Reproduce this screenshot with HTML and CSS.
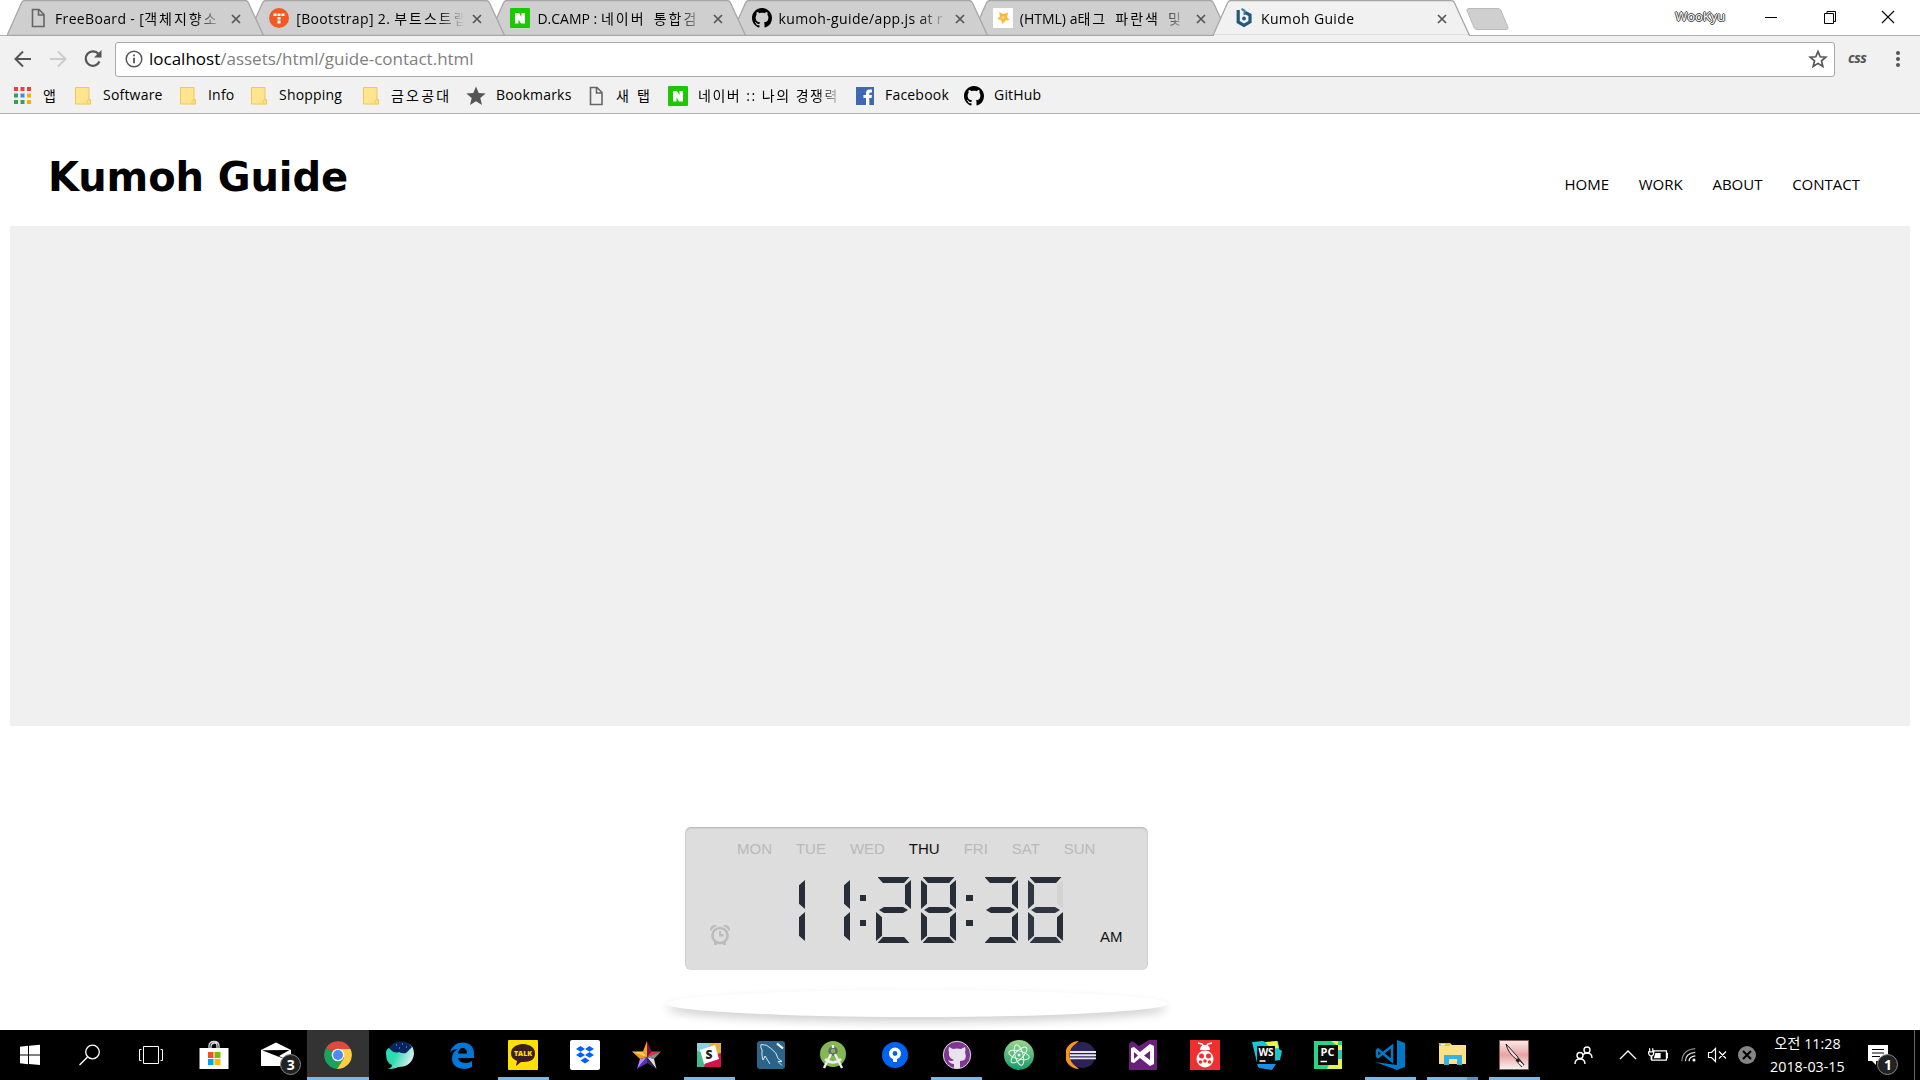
FILE: index.html
```html
<!DOCTYPE html>
<html lang="ko">
<head>
<meta charset="utf-8">
<title>Kumoh Guide</title>
<link rel="stylesheet" href="styles.css">
</head>
<body>
<svg class="defs" width="0" height="0" aria-hidden="true">
  <symbol id="doc" viewBox="0 0 20 20"><path d="M4.500 1.500h6.500l5 5V18.500H4.500zM10.500 1.500V7H16" fill="none" stroke="#666" stroke-width="1.600"/></symbol>
  <symbol id="naver" viewBox="0 0 20 20"><rect width="20" height="20" rx="1" fill="#1ec800"/><path d="M5 5h4l2.500 4V5H15v10.500h-4l-2.500-4v4H5z" fill="#fff"/></symbol>
  <symbol id="octo" viewBox="0 0 16 16"><path d="M8 0C3.580 0 0 3.580 0 8c0 3.540 2.290 6.530 5.470 7.590.4.070.550-.170.550-.380 0-.190-.010-.820-.010-1.490-2.010.370-2.530-.490-2.690-.940-.090-.230-.480-.940-.820-1.130-.280-.150-.680-.520-.010-.530.630-.010 1.080.580 1.230.820.720 1.210 1.870.870 2.330.660.070-.520.280-.870.510-1.070-1.780-.2-3.640-.890-3.640-3.950 0-.870.310-1.590.820-2.150-.080-.2-.360-1.020.080-2.120 0 0 .670-.210 2.200.820.640-.180 1.320-.270 2-.270s1.360.090 2 .270c1.530-1.040 2.200-.820 2.200-.820.440 1.100.160 1.920.080 2.120.510.560.820 1.270.820 2.150 0 3.070-1.870 3.750-3.650 3.950.290.250.540.730.540 1.480 0 1.070-.010 1.930-.010 2.200 0 .210.150.460.550.380A8.010 8.010 0 0 0 16 8c0-4.420-3.580-8-8-8z"/></symbol>
  <symbol id="folder" viewBox="0 0 20 20"><path d="M2.500 1.500h13.500v12h1.500v4.500h-15z" fill="#ffe58f" stroke="#ecc95a"/><path d="M14 18v-3.500q1.700-2 3.500 0V18z" fill="#fbdc78" stroke="#ecc95a" stroke-width=".7"/></symbol>
  <symbol id="close" viewBox="0 0 12 12"><path d="M2 2l8 8M10 2l-8 8" stroke="#555" stroke-width="1.700"/></symbol>
  <symbol id="tabshape" viewBox="0 0 258 36" preserveAspectRatio="none"><path d="M0 35.500L14.500 3Q15.500.5 18 .5H239Q241.500.5 242.500 3L257.500 35.500z" /></symbol>
</svg>

<header class="chrome">
  <div class="tabstrip">
    <div class="tab"><svg class="shape"><use href="#tabshape"/></svg><svg class="fav"><use href="#doc"/></svg><span class="title wide">FreeBoard - [<span class="ko">객체지향소</span></span><svg class="x"><use href="#close"/></svg></div>
    <div class="tab"><svg class="shape"><use href="#tabshape"/></svg><svg class="fav" viewBox="0 0 20 20"><circle cx="10" cy="10" r="10" fill="#f15a24"/><path d="M4.500 5.500h3v2.500h-3zM8.500 5.500h3v2.500h-3zM12.500 5.500h3v2.500h-3zM8.500 9h3v2.500h-3zM8.500 12.500h3v3h-3z" fill="#fff"/></svg><span class="title wide">[Bootstrap] 2. <span class="ko">부트스트랩</span></span><svg class="x"><use href="#close"/></svg></div>
    <div class="tab"><svg class="shape"><use href="#tabshape"/></svg><svg class="fav"><use href="#naver"/></svg><span class="title">D.CAMP : <span class="ko">네이버 통합검</span></span><svg class="x"><use href="#close"/></svg></div>
    <div class="tab"><svg class="shape"><use href="#tabshape"/></svg><svg class="fav"><use href="#octo"/></svg><span class="title wide">kumoh-guide/app.js at r</span><svg class="x"><use href="#close"/></svg></div>
    <div class="tab"><svg class="shape"><use href="#tabshape"/></svg><svg class="fav" viewBox="0 0 20 20"><path d="M0 0h20v20H0z" fill="#fff"/><path d="M6 4l4 2 5-1.500-1 4.500 2.500 3-4 .5L9.500 16 8 12l-4-1 3-2.500z" fill="#fdb933"/><circle cx="10" cy="9.500" r="1.500" fill="#ffe08a"/></svg><span class="title">(HTML) a<span class="ko">태그 파란색 및</span></span><svg class="x"><use href="#close"/></svg></div>
    <div class="tab active"><svg class="shape"><use href="#tabshape"/></svg><svg class="fav" viewBox="0 0 20 20"><path d="M4.200 2v12L10 17.300l6-3.400V7L11 4.300" fill="none" stroke="#24597f" stroke-width="3.200"/><path d="M7.500 1l3 1.500V7" fill="none" stroke="#3b7aa5" stroke-width="2"/><circle cx="10" cy="10.500" r="1.900" fill="#24597f"/></svg><span class="title wide">Kumoh Guide</span><svg class="x"><use href="#close"/></svg></div>
    <svg class="newtab" viewBox="0 0 44 22"><path d="M3 .5H32q2 0 3 2l7 17q.5 2-2 2H11q-2 0-3-2L1 2.500Q.5.5 3 .5z" fill="#cfcfcf" stroke="#bbb"/></svg>
    <span class="user">WooKyu</span>
    <div class="winbtns">
      <svg viewBox="0 0 14 14"><path d="M1 7.500h12" stroke="#000"/></svg>
      <svg viewBox="0 0 14 14"><path d="M1.500 3.500h9v10h-9zM4 3V1.500h8.500v10H11" fill="none" stroke="#000"/></svg>
      <svg viewBox="0 0 14 14"><path d="M1 1l12 12M13 1L1 13" stroke="#000" stroke-width="1.100"/></svg>
    </div>
  </div>

  <div class="toolbar">
    <svg class="nav" viewBox="0 0 20 20"><path d="M18 10H3M10 2.500L2.500 10l7.500 7.500" fill="none" stroke="#555" stroke-width="2"/></svg>
    <svg class="nav" viewBox="0 0 20 20"><path d="M2 10h15M10 2.500l7.500 7.500-7.500 7.500" fill="none" stroke="#ccc" stroke-width="2"/></svg>
    <svg class="nav" viewBox="0 0 20 20"><path d="M16.500 12.500A7.200 7.200 0 1 1 15.500 5" fill="none" stroke="#555" stroke-width="2.200"/><path d="M18.500 1v7.500H11z" fill="#555"/></svg>
    <div class="omnibox">
      <svg class="info" viewBox="0 0 18 18"><circle cx="9" cy="9" r="7.800" fill="none" stroke="#555" stroke-width="1.500"/><path d="M8.100 4.500h1.800v1.800H8.100zM8.100 7.700h1.800v5.600H8.100z" fill="#555"/></svg>
      <span class="url"><b>localhost</b>/assets/html/guide-contact.html</span>
      <svg class="star" viewBox="0 0 20 20"><path d="M10 2.500l2.200 5.300 5.600.4-4.300 3.700 1.300 5.500-4.800-3-4.800 3 1.300-5.500L2.200 8.200l5.600-.4z" fill="none" stroke="#555" stroke-width="1.700"/></svg>
    </div>
    <span class="css">css</span>
    <svg class="dots" viewBox="0 0 6 18"><circle cx="3" cy="3" r="2" fill="#555"/><circle cx="3" cy="9" r="2" fill="#555"/><circle cx="3" cy="15" r="2" fill="#555"/></svg>
  </div>

  <nav class="bookmarks">
    <div class="bm apps"><svg viewBox="0 0 17 17"><path d="M0 0h4v4H0zM6.500 0h4v4h-4zM13 0h4v4h-4z" fill="#ea4335"/><path d="M0 6.500h4v4H0zM0 13h4v4H0zM6.500 13h4v4h-4z" fill="#34a057"/><path d="M6.500 6.500h4v4h-4z" fill="#4285f4"/><path d="M13 6.500h4v4h-4zM13 13h4v4h-4z" fill="#fbab05"/></svg><span>앱</span></div>
    <div class="bm"><svg><use href="#folder"/></svg><span>Software</span></div>
    <div class="bm"><svg><use href="#folder"/></svg><span>Info</span></div>
    <div class="bm"><svg><use href="#folder"/></svg><span>Shopping</span></div>
    <div class="bm"><svg><use href="#folder"/></svg><span class="ko loose">금오공대</span></div>
    <div class="bm"><svg viewBox="0 0 20 20"><path d="M10 .5l2.700 6.500 7 .5-5.400 4.500 1.700 7L10 15.200 4 19l1.700-7L.3 7.500l7-.5z" fill="#555"/></svg><span>Bookmarks</span></div>
    <div class="bm"><svg><use href="#doc"/></svg><span class="ko loose">새 탭</span></div>
    <div class="bm"><svg><use href="#naver"/></svg><span class="ko fade">네이버 :: 나의 경쟁력</span></div>
    <div class="bm"><svg viewBox="0 0 20 20"><path d="M1 1h18v18H1z" fill="#4267b2"/><path d="M11 19v-7H8.500V9H11V7q0-3.500 3.500-3.500H17v3h-1.500q-1.200 0-1.200 1.200V9H17l-.4 3h-2.300v7z" fill="#fff"/></svg><span>Facebook</span></div>
    <div class="bm"><svg><use href="#octo"/></svg><span>GitHub</span></div>
  </nav>
</header>

<main class="page">
  <div class="masthead">
    <h1>Kumoh Guide</h1>
    <nav class="menu"><a>HOME</a><a>WORK</a><a>ABOUT</a><a>CONTACT</a></nav>
  </div>
  <section class="map"></section>
  <section class="clock">
    <div class="days"><span>MON</span><span>TUE</span><span>WED</span><span class="on">THU</span><span>FRI</span><span>SAT</span><span>SUN</span></div>
    <div class="face">
      <svg class="alarm" viewBox="0 0 20 20"><circle cx="10" cy="10.500" r="7.500" fill="none" stroke="#bbbcbe" stroke-width="2.600"/><path d="M9 6v5.500h4.500V9H11V6zM0 5Q0 0 5 0l2 1Q2.500 2.500 1 6zM20 5q0-5-5-5l-2 1Q17.500 2.500 19 6zM4 16V20h3v-2.500zM16 16V20h-3v-2.500z" fill="#bbbcbe"/></svg>
      <div class="digits" role="img" aria-label="11:28:36">
        <div class="digit"><i class="b"></i><i class="c"></i></div>
        <div class="digit"><i class="b"></i><i class="c"></i></div>
        <div class="colon"><i></i><i></i></div>
        <div class="digit"><i class="a"></i><i class="b"></i><i class="g"></i><i class="e"></i><i class="d"></i></div>
        <div class="digit"><i class="a"></i><i class="b"></i><i class="c"></i><i class="d"></i><i class="e"></i><i class="f"></i><i class="g"></i></div>
        <div class="colon second"><i></i><i></i></div>
        <div class="digit"><i class="a"></i><i class="b"></i><i class="c"></i><i class="d"></i><i class="g"></i></div>
        <div class="digit changing"><i class="a dark"></i><i class="b off"></i><i class="c dark"></i><i class="d"></i><i class="e"></i><i class="f"></i><i class="g"></i></div>
      </div>
      <span class="ampm">AM</span>
    </div>
  </section>
  <div class="plate"></div>
</main>

<footer class="taskbar">
  <div class="t start"><svg viewBox="0 0 30 30"><path d="M5 6.800l8-1V14.500H5zM14 5.700L25 4.800v9.700H14zM5 15.500h8v8.700L5 23.200zM14 15.500h11V25l-11-1z" fill="#fff"/></svg></div>
  <div class="t"><svg viewBox="0 0 30 30"><circle cx="17.500" cy="12" r="6.800" fill="none" stroke="#fff" stroke-width="1.300"/><path d="M12.500 17L4.500 25" stroke="#fff" stroke-width="1.500"/></svg></div>
  <div class="t"><svg viewBox="0 0 30 30"><path d="M7.500 6.500h15v17h-15zM5.500 9.500h-2v11h2M24.500 9.500h2v11h-2" fill="none" stroke="#fff"/></svg></div>
  <div class="apps-row">
    <div class="t"><svg viewBox="0 0 30 30"><path d="M10 9V6q0-4.500 5-4.500T20 6v3M12 9V6.500Q12 3 16 3q2 0 2 3v3" fill="none" stroke="#ddd" stroke-width="1.300"/><path d="M.5 8h29v21H.5z" fill="#fff"/><path d="M9 12h5.500v6H9z" fill="#f25022"/><path d="M15.500 12H21.500v6h-6z" fill="#7fba00"/><path d="M9 19h5.500v6H9z" fill="#00a4ef"/><path d="M15.500 19H21.500v6h-6z" fill="#ffb900"/></svg></div>
    <div class="t"><svg viewBox="0 0 30 30"><path d="M0 10L15 2.500 30 10v16H0z" fill="#fff"/><path d="M1 10.200l27.500-.2L18 16l8 4z" fill="#000"/></svg><span class="badge">3</span></div>
    <div class="t current"><svg viewBox="0 0 30 30"><path d="M15 15L3 8A14 14 0 0 1 27.500 9z" fill="#dd4b3e"/><path d="M15 15L3 8a14 14 0 0 0 11 21l7-11z" fill="#1da15f"/><path d="M14 29A14 14 0 0 0 27.500 9H15l6 9z" fill="#ffce44"/><circle cx="15" cy="15" r="6.300" fill="#f4f4f4"/><circle cx="15" cy="15" r="5" fill="#4c8bf5"/></svg></div>
    <div class="t"><svg viewBox="0 0 30 30"><defs><linearGradient id="wh" y2=".4"><stop offset=".45" stop-color="#2bdcb0"/><stop offset="1" stop-color="#d4eeee"/></linearGradient></defs><path d="M1 13q0 10 6 12 0 3-5 4 8 0 11-2 14 0 16-13Q29 5 22 3L4 8q-3 1-3 5z" fill="url(#wh)"/><path d="M4 8Q8 1 16 1.200 24 1.500 27 7l-6 6q-4 1-7-1-5 2-10-4z" fill="#0b2460"/><path d="M11 5h1M17 4h1M21 7h1M14 8h1" stroke="#6cf"/></svg></div>
    <div class="t"><svg viewBox="0 0 30 30"><path d="M3 13Q5 3 15.500 2.500 27 3 27 14v4H11q1 5 8 5 3 0 6-2v6q-4 2-8 2Q5 28 5 18q0-6 6-9-6 0-8 4zM11 13.500h9Q20 8 15.500 8 12 8 11 13.500z" fill="#0078d7" fill-rule="evenodd"/></svg></div>
    <div class="t run"><svg viewBox="0 0 30 30"><rect width="30" height="30" rx="1" fill="#ffe000"/><path d="M15 4q12 1 12 9.500T15 22h-2l-5 4 1-5Q3 18.500 3 13.500 3 5 15 4z" fill="#3b1e1e"/><text x="15" y="16.200" text-anchor="middle" font-size="7" font-weight="900" fill="#ffe000">TALK</text></svg></div>
    <div class="t"><svg viewBox="0 0 30 30"><rect width="30" height="30" rx="2" fill="#fff"/><path d="M10.500 6l4.500 2.900-4.500 2.900L6 8.900zM19.500 6L24 8.900l-4.500 2.900L15 8.900zM10.500 12l4.500 2.900-4.500 2.900L6 14.900zM19.500 12l4.500 2.900-4.500 2.900-4.500-2.900zM15 17.500l4.500 2.900L15 23.500l-4.500-3.100z" fill="#0061fe"/></svg></div>
    <div class="t"><svg viewBox="0 0 30 30"><path d="M15 1l-4 10.500L15 17z" fill="#f5a623"/><path d="M15 1l4.500 10.500L15 17z" fill="#7b1240"/><path d="M0 11.500h11L15 17l-8-1z" fill="#ffd34d"/><path d="M0 11.500L15 17l-7 2z" fill="#f39c12"/><path d="M29 11.500h-9.500L15 17z" fill="#e8304a"/><path d="M29 11.500L15 17l7 2z" fill="#888"/><path d="M8 19l7-2-10 12z" fill="#b08aff"/><path d="M15 17v6L5 29z" fill="#5d2fc0"/><path d="M22 19l-7-2 9.500 12z" fill="#ddd"/><path d="M15 17v6l9.500 6z" fill="#3a2352"/></svg></div>
    <div class="t run"><svg viewBox="0 0 30 30"><path d="M3 3h14l-4 12-10-2z" fill="#8bd2dc"/><path d="M16 3h11v13l-12-2z" fill="#e3b33f"/><path d="M3 11l12 3v13H3z" fill="#46ba93"/><path d="M14 16l13-3v14H10z" fill="#d6134a"/><path d="M6 10l15-5 4 14-15 5z" fill="#fff"/><text x="15" y="19" text-anchor="middle" font-size="12" font-weight="900" fill="#222">S</text></svg></div>
    <div class="t"><svg viewBox="0 0 30 30"><rect x="1" y="1" width="28" height="28" rx="3" fill="#2b6488"/><path d="M5 4.500q6-.5 10 4 6 4 7 10l4 3-4 0 4 4M5 4.500q-1 2.500 1 5.500v6l1 4 2-4 5 8" fill="none" stroke="#dce9f0" stroke-width="1"/><path d="M21 3.500l6 5" stroke="#fff" stroke-width="2.200"/></svg></div>
    <div class="t"><svg viewBox="0 0 30 30"><circle cx="15" cy="14" r="13" fill="#83b94e"/><circle cx="15" cy="11" r="3.500" fill="none" stroke="#667" stroke-width="2.500"/><path d="M15 5v3M13 14L6 28M17 14l7 14M7 19q8 7 16 0" fill="none" stroke="#eee" stroke-width="2.400"/></svg></div>
    <div class="t"><svg viewBox="0 0 30 30"><circle cx="15" cy="15" r="13" fill="#0064f0"/><circle cx="15" cy="13.500" r="4.200" fill="none" stroke="#fff" stroke-width="3.600"/><path d="M13 17h4v5h-4z" fill="#fff"/></svg></div>
    <div class="t run"><svg viewBox="0 0 30 30"><circle cx="15" cy="15" r="13.700" fill="#803597" stroke="#ddd"/><path d="M7 7l4 2q4-1 8 0l4-2q1 3 0 5 3 9-5 9v7h-6v-4q-4 0-6-4 4 2 6 0-6-2-5-8-1-2 0-5z" fill="#e8e3ea"/></svg></div>
    <div class="t"><svg viewBox="0 0 30 30"><defs><linearGradient id="at" x2="0" y2="1"><stop stop-color="#9bd68b"/><stop offset="1" stop-color="#149b6e"/></linearGradient></defs><circle cx="15" cy="15" r="15" fill="url(#at)"/><g fill="none" stroke="#e8f8ee" stroke-width="1"><ellipse cx="15" cy="15" rx="10.500" ry="4" transform="rotate(15 15 15)"/><ellipse cx="15" cy="15" rx="10.500" ry="4" transform="rotate(75 15 15)"/><ellipse cx="15" cy="15" rx="10.500" ry="4" transform="rotate(135 15 15)"/></g><circle cx="15" cy="15" r="1.500" fill="#fff"/></svg></div>
    <div class="t"><svg viewBox="0 0 30 30"><path d="M13 1a14 14 0 0 0 0 28q-7-5-7-14t7-14z" fill="#f7941e"/><circle cx="16.500" cy="15" r="13" fill="#2c2255"/><path d="M4 12h26M4 15.200h26M4 18.400h26" stroke="#e8e6f2" stroke-width="1.900"/></svg></div>
    <div class="t"><svg viewBox="0 0 30 30"><path d="M1 4l3-3 7 5L21 0h8v30H1z" fill="#68217a"/><path d="M3 8l3-1 6 5 10-8 4 2v18l-4 2-10-8-6 5-3-1z" fill="#fff"/><path d="M6 12l4 3.500-4 3.500zM22 11v9l-6-4.500z" fill="#68217a"/></svg></div>
    <div class="t"><svg viewBox="0 0 30 30"><path d="M0 0h30v30H0z" fill="#f03030"/><path d="M8 3l4 1 3 4 3-4 4-1" fill="none" stroke="#fff" stroke-width="1.500"/><path d="M10 10q0-5 5-5t5 5z" fill="#fff"/><ellipse cx="15" cy="19" rx="8.500" ry="8.500" fill="#fff"/><g fill="#f03030"><circle cx="11.500" cy="16" r="2.500"/><circle cx="18.500" cy="16" r="2.500"/><circle cx="10.500" cy="22" r="1.800"/><circle cx="19.500" cy="22" r="1.800"/><circle cx="15" cy="21" r="1.800"/></g></svg></div>
    <div class="t"><svg viewBox="0 0 30 30"><path d="M0 2l11-1 4 2 11-2 1 8 3 2-2 9-7 1-1 8-14-2z" fill="#16c7d6"/><path d="M13 2l12-1 2 7-8 1z" fill="#e8f24b"/><path d="M6 24h18l-4 6-13-2z" fill="#1d8ee6"/><path d="M5 6h18v18H5z" fill="#0a0a0a"/><text x="14" y="16" text-anchor="middle" font-size="10" font-weight="700" fill="#fff">WS</text><path d="M7.500 21h6" stroke="#fff" stroke-width="1.500"/></svg></div>
    <div class="t"><svg viewBox="0 0 30 30"><path d="M1 1h28v28H1z" fill="#21d789"/><path d="M25 5h4v24H14z" fill="#e6f254"/><path d="M18 1h7v5z" fill="#e6f254"/><path d="M25 10h4v9h-4z" fill="#25c9c9"/><path d="M5 5h20v20H5z" fill="#0a0a0a"/><text x="14.500" y="16" text-anchor="middle" font-size="11" font-weight="700" fill="#fff">PC</text><path d="M7.500 21.500h6.500" stroke="#fff" stroke-width="1.500"/></svg></div>
    <div class="t run"><svg viewBox="0 0 30 30"><path d="M22 0l8 3v24l-8 3L0 22l22 3z" fill="#0078c8"/><path d="M17 6v15L3 9.500l-1 1v5.500l1 1z" fill="none" stroke="#0078c8" stroke-width="2.500"/></svg></div>
    <div class="t run multi"><svg viewBox="0 0 30 30"><path d="M2 3h11l2 2h14v19H2z" fill="#ffe08a"/><path d="M2 3h11v3H2z" fill="#f5bd2b"/><path d="M4 4h4v1.500H4z" fill="#dff3ff"/><path d="M7 15h18v10h-5v-6h-8v6H7z" fill="#38b0e3"/></svg></div>
    <div class="t run"><svg viewBox="0 0 30 30"><defs><linearGradient id="kn" x2="0" y2="1"><stop stop-color="#fbecec"/><stop offset=".5" stop-color="#e9a3a3"/><stop offset="1" stop-color="#fbf3f3"/></linearGradient></defs><path d="M.5.500h29v29H.5z" fill="url(#kn)" stroke="#8a5a5a"/><path d="M7 4l11 12 3 5-4-2Q9 13 7 4z" fill="#f2d6d6" stroke="#222"/><path d="M18 19l6 7" stroke="#222" stroke-width="4"/><path d="M20 22l4 4" stroke="#fff" stroke-width="2"/></svg></div>
  </div>
  <div class="tray">
    <svg class="people" viewBox="0 0 20 20"><g fill="none" stroke="#fff" stroke-width="1.400"><circle cx="14" cy="5" r="3"/><circle cx="7" cy="10.500" r="3"/><path d="M2 19q0-5 5-5t5 5M10 10q1-2 4-2 5 0 5 5"/></g></svg>
    <svg class="up" viewBox="0 0 20 20"><path d="M2 14l8-8 8 8" fill="none" stroke="#fff" stroke-width="1.300"/></svg>
    <svg class="batt" viewBox="0 0 20 20"><path d="M6 5.500h12.500v9H4.500V11M18.500 8h1.300v4h-1.300M2.500 3v3M5.500 3v3M1 6.500h6M1.500 6.500q0 4 2.500 4t2.500-4M4 10v4" fill="none" stroke="#fff" stroke-width="1.200"/><path d="M8 7.500h5v5H6.500z" fill="#fff"/></svg>
    <svg class="wifi" viewBox="0 0 20 20"><g fill="none" stroke-width="1.300"><path d="M2 17Q3 4 17 3" stroke="#888"/><path d="M6 17q0-9 11-10" stroke="#ddd"/><path d="M10 17q0-5 7-6" stroke="#fff"/></g><circle cx="15.500" cy="15.500" r="1.700" fill="#fff"/></svg>
    <svg class="mute" viewBox="0 0 20 20"><path d="M1.500 7.500h3l4-4v13l-4-4h-3zM12 6.500l7 7M19 6.500l-7 7" fill="none" stroke="#fff" stroke-width="1.200"/></svg>
    <svg class="err" viewBox="0 0 20 20"><circle cx="10" cy="10" r="9" fill="#858585"/><path d="M6 6l8 8M14 6l-8 8" stroke="#000" stroke-width="2"/></svg>
    <div class="datetime"><span>오전 11:28</span><span>2018-03-15</span></div>
    <div class="note"><svg viewBox="0 0 20 20"><path d="M0 0h20v16H8v4l-4-4H0z" fill="#fff"/><path d="M4 4.500h12M4 8h12M4 11.500h8" stroke="#000"/></svg><span class="badge">1</span></div>
    <i class="peek"></i>
  </div>
</footer>
</body>
</html>
```
FILE: styles.css
```css
* { box-sizing: border-box; }
body {
  margin: 0; width: 1920px; height: 1080px; overflow: hidden; background: #fff; color: #000;
  display: grid; grid-template-rows: 114px 916px 50px;
  font: 14px "Open Sans", "Noto Sans CJK KR", sans-serif;
}
svg { display: block; flex: none; }
.defs { position: absolute; }

/* browser chrome */
.chrome { display: grid; grid-template-rows: 36px 41px 37px; background: #f1f1f1; border-bottom: 1px solid #b0b0b0; }
.tabstrip { display: flex; align-items: center; background: linear-gradient(#fff 35px, #b2b2b2 35px); padding-left: 7px; }
.tab { position: relative; flex: none; display: flex; align-items: center; width: 257px; height: 36px; margin-right: -15.800px; padding-left: 21px; }
.tab:nth-child(1) { z-index: 5; }
.tab:nth-child(2) { z-index: 4; }
.tab:nth-child(3) { z-index: 3; }
.tab:nth-child(4) { z-index: 2; }
.tab:nth-child(5) { z-index: 1; }
.shape { position: absolute; inset: 0; width: 257px; height: 36px; fill: #cfcfcf; stroke: #a6a6a6; stroke-width: 1.300; }
.tab.active { z-index: 6; }
.active .shape { fill: #f1f1f1; }
.active::after { content: ""; position: absolute; left: 1px; right: 1px; bottom: 0; height: 1.500px; background: #f1f1f1; }
.fav { position: relative; width: 20px; height: 20px; }
.tab .title { position: relative; width: 168px; margin-left: 7px; white-space: nowrap; letter-spacing: 0;
  -webkit-mask-image: linear-gradient(90deg, #000 140px, transparent 168px); mask-image: linear-gradient(90deg, #000 140px, transparent 168px); }
.tab .title.wide { letter-spacing: .35px; }
.tab .ko { letter-spacing: 2px; word-spacing: 2.500px; }
.x { position: relative; width: 12px; height: 12px; margin-left: 7px; margin-top: 2px; }
.newtab { width: 44px; height: 22px; margin: 2px 0 0 12px; }
.user { margin: -4px 0 0 165px; width: 55px; color: #fff; font-size: 13px; text-shadow: 1px 0 0 #444, -1px 0 0 #444, 0 1px 0 #444, 0 -1px 0 #444; }
.winbtns { display: flex; gap: 44.500px; margin: -3px 0 0 34px; }
.winbtns svg { width: 14px; height: 14px; }

.toolbar { display: flex; align-items: center; padding-left: 13px; }
.nav { width: 20px; height: 20px; margin: 5px 15px 0 0; }
.omnibox { display: flex; align-items: center; width: 1720px; height: 35px; margin: 5px 0 0 -3px; padding: 0 6px 0 9px; background: #fff; border: 1px solid #a9a9a9; border-radius: 3px; }
.info { width: 18px; height: 18px; }
.url { flex: 1; margin: -1px 0 0 6px; font-size: 17px; color: #808080; }
.url b { font-weight: 400; color: #000; }
.star { width: 20px; height: 20px; }
.css { width: 20px; margin: 1px 0 0 13px; color: #555; font: italic 700 14px "Open Sans", sans-serif; letter-spacing: -.6px; }
.dots { width: 6px; height: 18px; margin: 5px 0 0 27px; }

.bookmarks { display: grid; grid-template-columns: 60px 105px 71px 112px 105px 120px 82px 187px 109px 90px; padding-left: 13px; align-items: center; }
.bm { display: flex; align-items: center; gap: 10px; white-space: nowrap; letter-spacing: .2px; }
.bm span { margin-top: -2px; }
.bm svg { width: 20px; height: 20px; }
.bm.apps { gap: 12px; padding-left: 1px; }
.bm.apps svg { width: 17px; height: 17px; }
.bm .ko { letter-spacing: 1.500px; }
.bm .ko.loose { letter-spacing: 2.200px; }
.bm .fade { width: 145px; -webkit-mask-image: linear-gradient(90deg, #000 120px, transparent 145px); mask-image: linear-gradient(90deg, #000 120px, transparent 145px); }

/* web page */
.page { display: flex; flex-direction: column; align-items: center; padding: 0 10px; overflow: hidden; }
.masthead { width: 100%; height: 112px; display: flex; justify-content: space-between; align-items: baseline; padding: 39px 50px 0 38px; }
h1 { margin: 0; font: 700 40px/48px "DejaVu Sans", sans-serif; letter-spacing: -.1px; }
.menu { display: flex; gap: 29.700px; font-size: 15px; position: relative; top: -1px; }
.map { width: 100%; height: 500px; background: #f0f0f0; }
.clock { width: 463px; height: 143px; margin: 101px 87px 0 0; padding-top: 13px; border-radius: 6px; background: #ddd; box-shadow: inset 0 1px 2px rgba(0,0,0,.2); font: 15px/18px "Liberation Sans", sans-serif; }
.days { display: flex; justify-content: space-between; padding: 0 52.500px 0 52px; color: #b9b9b9; }
.days .on, .ampm { color: #111; }
.face { display: flex; height: 90px; padding: 19px 25.500px 0 25px; }
.alarm { width: 20px; height: 20px; margin-top: 48px; }
.digits { display: flex; margin-left: 40px; height: 66px; }
.ampm { margin: 51px 0 0 auto; }
.digit { display: grid; width: 35px; height: 66px; margin-right: 10px; color: #272e38; }
.changing { margin-right: 0; color: #303743; }
.digit i { grid-area: 1 / 1; background: currentColor; }
.digit .a, .digit .d { width: 32px; height: 6px; justify-self: center; }
.digit .a { clip-path: polygon(0 0, 100% 0, 83% 100%, 17% 100%); }
.digit .d { align-self: end; clip-path: polygon(17% 0, 83% 0, 100% 100%, 0 100%); }
.digit .g { width: 29px; height: 6px; place-self: center; clip-path: polygon(0 50%, 17% 0, 83% 0, 100% 50%, 83% 100%, 17% 100%); }
.digit .b, .digit .c, .digit .e, .digit .f { width: 6px; height: 29px; }
.digit .b, .digit .c { justify-self: end; }
.digit .b, .digit .f { margin-top: 3px; }
.digit .c, .digit .e { align-self: end; margin-bottom: 2px; }
.digit .b, .digit .c { clip-path: polygon(100% 0, 100% 100%, 0 82%, 0 18%); }
.digit .e, .digit .f { clip-path: polygon(0 0, 100% 18%, 100% 82%, 0 100%); }
.digit .off { color: #d3d3d3; }
.digit .dark { color: #272e38; }
.colon { width: 6px; margin-right: 10px; padding-top: 18px; display: flex; flex-direction: column; gap: 19px; }
.colon i { width: 100%; height: 6px; background: #272e38; }
.colon.second { width: 7px; }
.plate { flex: none; width: 500px; height: 27px; margin: 20px 87px 0 0; border-radius: 50%; background: #fff; box-shadow: 0 5px 10px rgba(0,0,0,.18); }

/* taskbar */
.taskbar { display: flex; background: #000; color: #fff; z-index: 1; }
.apps-row { display: flex; width: 1361px; margin-left: 2px; }
.t { position: relative; flex: none; width: 60.300px; height: 50px; display: grid; place-items: center; }
.t svg { width: 30px; height: 30px; font-family: "Open Sans", sans-serif; }
.apps-row .t { width: 61.930px; }
.current { background: linear-gradient(#333 47px, #76b9ed 47px); }
.run { background: linear-gradient(#76b9ed, #76b9ed) center bottom / 51px 3px no-repeat; }
.multi { background: linear-gradient(90deg, #76b9ed 78%, #5a8fc0 78%) center bottom / 51px 3px no-repeat; }
.badge { position: absolute; width: 21px; height: 21px; border: 1px solid #888; border-radius: 50%; background: #222; font-weight: 700; line-height: 19px; text-align: center; }
.t .badge { left: 35.500px; top: 24px; }
.tray { flex: 1; display: flex; align-items: center; }
.people { width: 20px; height: 20px; margin-left: 29.500px; }
.up { width: 20px; height: 20px; margin-left: 25px; }
.batt { width: 21px; height: 21px; margin-left: 9px; }
.wifi { width: 18px; height: 20px; margin-left: 12px; }
.mute { width: 20px; height: 20px; margin-left: 9px; }
.err { width: 20px; height: 20px; margin-left: 10px; }
.datetime { display: flex; flex-direction: column; align-items: center; width: 80px; margin-left: 10px; line-height: 23px; font-size: 14.300px; white-space: nowrap; }
.note { position: relative; width: 20px; height: 20px; margin-left: 21px; }
.note svg { width: 20px; height: 20px; }
.note .badge { left: 9px; top: 9px; }
.peek { width: 1px; height: 50px; margin: 0 5px 0 auto; background: #666; }
```
